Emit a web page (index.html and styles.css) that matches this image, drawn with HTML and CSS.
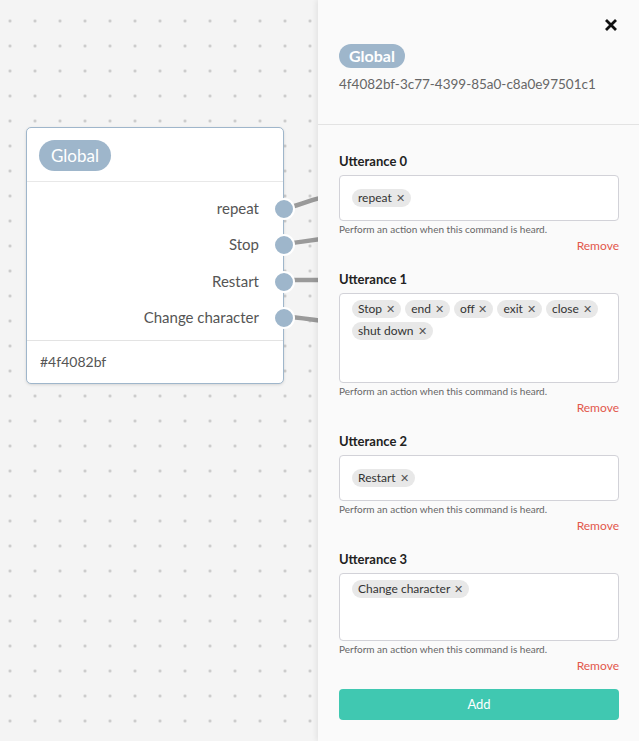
FILE: index.html
```html
<!DOCTYPE html>
<html lang="en">
<head>
  <meta charset="UTF-8" />
  <meta name="viewport" content="width=device-width, initial-scale=1.0"/>
  <title>Flow editor</title>
  <link rel="stylesheet" href="styles.css">
</head>
<body>
  <div class="canvas">
    <svg class="wires" width="340" height="741" viewBox="0 0 340 741">
      <path d="M283 208 C 300 207, 305 199, 340 194" />
      <path d="M283 244 C 300 243, 305 240, 340 237" />
      <path d="M283 280 C 300 280, 320 280, 340 280" />
      <path d="M283 317 C 300 317, 305 319, 340 323" />
    </svg>

    <div class="node">
      <div class="node-head">
        <span class="pill">Global</span>
      </div>
      <div class="node-body">
        <div class="port-row">repeat<span class="port"></span></div>
        <div class="port-row">Stop<span class="port"></span></div>
        <div class="port-row">Restart<span class="port"></span></div>
        <div class="port-row">Change character<span class="port"></span></div>
      </div>
      <div class="node-foot">#4f4082bf</div>
    </div>
  </div>

  <div class="panel">
    <div class="panel-head">
      <div class="close">
        <svg width="14" height="14" viewBox="0 0 14 14"><path d="M2 2 L12 12 M12 2 L2 12" /></svg>
      </div>
      <span class="pill small">Global</span>
      <div class="uuid">4f4082bf-3c77-4399-85a0-c8a0e97501c1</div>
    </div>

    <div class="panel-body">
      <div class="utt">
        <div class="utt-label">Utterance 0</div>
        <div class="tags">
          <span class="tag">repeat <i>&#x2715;</i></span>
          <span class="tag-input"></span>
        </div>
        <div class="help">Perform an action when this command is heard.</div>
        <div class="remove">Remove</div>
      </div>

      <div class="utt">
        <div class="utt-label">Utterance 1</div>
        <div class="tags">
          <span class="tag">Stop <i>&#x2715;</i></span>
          <span class="tag">end <i>&#x2715;</i></span>
          <span class="tag">off <i>&#x2715;</i></span>
          <span class="tag">exit <i>&#x2715;</i></span>
          <span class="tag">close <i>&#x2715;</i></span>
          <span class="tag">shut down <i>&#x2715;</i></span>
          <span class="tag-input"></span>
        </div>
        <div class="help">Perform an action when this command is heard.</div>
        <div class="remove">Remove</div>
      </div>

      <div class="utt">
        <div class="utt-label">Utterance 2</div>
        <div class="tags">
          <span class="tag">Restart <i>&#x2715;</i></span>
          <span class="tag-input"></span>
        </div>
        <div class="help">Perform an action when this command is heard.</div>
        <div class="remove">Remove</div>
      </div>

      <div class="utt">
        <div class="utt-label">Utterance 3</div>
        <div class="tags">
          <span class="tag">Change character <i>&#x2715;</i></span>
          <span class="tag-input"></span>
        </div>
        <div class="help">Perform an action when this command is heard.</div>
        <div class="remove">Remove</div>
      </div>

      <div class="btn-add">Add</div>
    </div>
  </div>
</body>
</html>
```

FILE: styles.css
```css
body {
  margin: 0;
  font-family: Lato, "Open Sans", sans-serif;
  display: flex;
  height: 741px;
  overflow: hidden;
  color: #333;
}
.canvas {
  position: relative;
  width: 318px;
  flex: none;
  background-color: #f4f4f4;
  background-image: radial-gradient(circle, #c4c4c4 1.1px, transparent 1.6px);
  background-size: 25px 25px;
  background-position: -2.5px 8.5px;
}
.wires {
  position: absolute;
  top: 0;
  left: 0;
}
.wires path {
  fill: none;
  stroke: #9a9a9a;
  stroke-width: 4.5;
}
.node {
  position: absolute;
  left: 26px;
  top: 127px;
  width: 256px;
  background: #fff;
  border: 1px solid #9fb6cb;
  border-radius: 5px;
  box-shadow: 0 1px 3px rgba(0,0,0,0.12);
}
.node-head {
  height: 54px;
  padding: 12px 12px 0;
  box-sizing: border-box;
  border-bottom: 1px solid #e8e8e8;
}
.pill {
  display: inline-block;
  background: #9eb6cb;
  color: #fff;
  font-size: 17px;
  line-height: 31px;
  height: 31px;
  padding: 0 12px;
  border-radius: 16px;
}
.pill.small {
  font-size: 16px;
  font-weight: bold;
  line-height: 24px;
  height: 24px;
  padding: 0 10px;
  border-radius: 12px;
}
.node-body {
  padding: 8px 0 5px;
  border-bottom: 1px solid #e3e3e3;
}
.port-row {
  position: relative;
  height: 36.3px;
  line-height: 36.3px;
  text-align: right;
  padding-right: 24px;
  font-size: 15px;
  color: #555;
}
.port {
  position: absolute;
  right: -12px;
  top: 8px;
  width: 18px;
  height: 18px;
  border: 2px solid #fff;
  border-radius: 50%;
  background: #9eb6cb;
}
.node-foot {
  height: 42px;
  line-height: 42px;
  padding-left: 13px;
  font-size: 14px;
  color: #555;
}

.panel {
  flex: 1;
  background: #fafafa;
  box-shadow: -2px 0 5px rgba(0,0,0,0.07);
  position: relative;
  z-index: 2;
}
.panel-head {
  position: relative;
  height: 125px;
  box-sizing: border-box;
  padding: 44px 20px 0 21px;
  border-bottom: 1px solid #e3e3e3;
}
.close {
  position: absolute;
  right: 21px;
  top: 18px;
  line-height: 0;
}
.close path {
  stroke: #111;
  stroke-width: 2.8;
}
.uuid {
  margin-top: 8px;
  font-size: 13.5px;
  color: #666;
}
.panel-body {
  padding: 28px 20px 0 21px;
}
.utt + .utt {
  margin-top: 17px;
}
.utt-label {
  font-size: 13px;
  font-weight: bold;
  color: #222;
  line-height: 16px;
  margin-bottom: 6px;
}
.tags {
  display: flex;
  flex-wrap: wrap;
  align-items: center;
  border: 1px solid #d2d2d8;
  border-radius: 4px;
  background: #fff;
  padding: 4px 12px 5px;
}
.tag {
  display: inline-block;
  height: 18px;
  line-height: 18px;
  margin: 2px 4px 2px 0;
  padding: 0 6px;
  border-radius: 9px;
  background: #e8e8e8;
  font-size: 12px;
  color: #333;
}
.tag i {
  font-style: normal;
  font-size: 11px;
  color: #555;
  margin-left: 1px;
}
.tag-input {
  flex: 1;
  min-width: 186px;
  height: 35px;
}
.help {
  margin-top: 1px;
  font-size: 10px;
  line-height: 14px;
  color: #666;
}
.remove {
  text-align: right;
  font-size: 12px;
  line-height: 16px;
  margin-top: 2px;
  color: #e2574c;
}
.btn-add {
  margin-top: 15px;
  height: 31px;
  line-height: 31px;
  text-align: center;
  background: #40c8b1;
  color: #fff;
  font-size: 13px;
  border-radius: 4px;
}
```
